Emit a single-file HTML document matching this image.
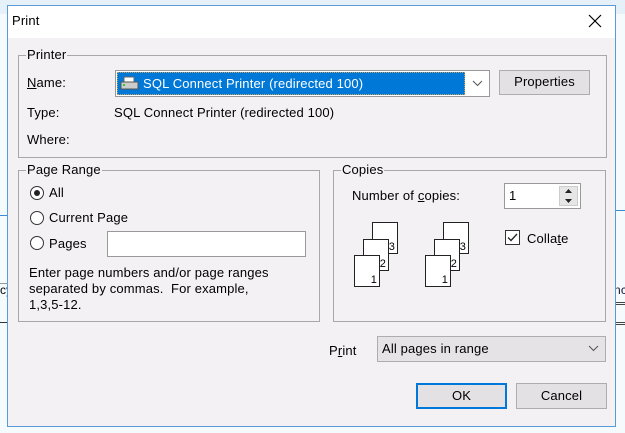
<!DOCTYPE html>
<html><head><meta charset="utf-8"><style>
*{box-sizing:border-box;margin:0;padding:0}
body{width:625px;height:433px;position:relative;overflow:hidden;background:#f5fafd;font-family:"Liberation Sans",Tahoma,sans-serif;font-size:13px;letter-spacing:0.15px;color:#000}
.a{position:absolute}
.t{position:absolute;white-space:nowrap;line-height:14px}
.grp{position:absolute;border:1px solid #a9a7a9}
.leg{position:absolute;top:-8px;left:7px;background:#f4f1f5;padding:0 1px;line-height:14px}
.btn{position:absolute;background:#e3e1e4;border:1px solid #adadad;text-align:center;line-height:22px}
.rad{position:absolute;width:14px;height:14px;border:1px solid #333;border-radius:50%;background:#fff}
.pg{position:absolute;width:26px;height:32px;border:1px solid #222;background:#fff;font-size:11px}
.pg span{position:absolute;right:2px;bottom:0px;line-height:12px}
u{text-decoration:underline}
</style></head><body>
<div class="a" style="left:0;top:0;width:625px;height:14px;background:#e6f0f8"></div>
<div class="a" style="left:0;top:215px;width:10px;height:1px;background:#3c8ad0"></div>
<div class="a" style="left:0;top:283px;width:10px;height:1px;background:#999"></div>
<div class="t" style="left:0;top:283px;font-size:12px">cy</div>
<div class="a" style="left:0;top:322px;width:10px;height:1px;background:#333"></div>
<div class="a" style="left:615px;top:210px;width:10px;height:1px;background:#3c8ad0"></div>
<div class="t" style="left:614px;top:283px;font-size:12px;color:#113">nc</div>
<div class="a" style="left:615px;top:302px;width:10px;height:3px;border-top:1px solid #444;border-bottom:1px solid #444"></div>
<div class="a" style="left:615px;top:322px;width:10px;height:3px;border-top:1px solid #444;border-bottom:1px solid #444"></div>
<div class="a" style="left:7px;top:5px;width:609px;height:422px;background:#f4f1f5;border:1px solid #5a9ad6"></div>
<div class="a" style="left:8px;top:6px;width:607px;height:32px;background:#fff"></div>
<div class="t" style="left:12px;top:14px;font-size:13px">Print</div>
<svg class="a" style="left:588px;top:14px" width="14" height="14"><path d="M1 1L13 13M13 1L1 13" stroke="#000" stroke-width="1.2"/></svg>

<div class="grp" style="left:18px;top:55px;width:589px;height:103px"><div class="leg">Printer</div></div>
<div class="t" style="left:27px;top:76px"><u>N</u>ame:</div>
<div class="a" style="left:115px;top:70px;width:375px;height:27px;background:#fff;border:1px solid #999"></div>
<div class="a" style="left:117px;top:72px;width:348px;height:23px;background:#0078d7;border:1px dotted #c8a060"></div>
<svg class="a" style="left:120px;top:74px" width="20" height="18"><path d="M4 3h10v5H4z" fill="#fff" stroke="#666"/><path d="M1 8h17v7H1z" fill="#ccc" stroke="#555"/><rect x="3" y="10" width="2" height="2" fill="#3c3"/></svg>
<div class="t" style="left:143px;top:77px;color:#fff">SQL Connect Printer (redirected 100)</div>
<svg class="a" style="left:472px;top:80px" width="11" height="7"><path d="M1 1l4.5 4.5L10 1" stroke="#555" fill="none"/></svg>
<div class="btn" style="left:499px;top:70px;width:91px;height:25px">Properties</div>
<div class="t" style="left:27px;top:106px">Type:</div>
<div class="t" style="left:114px;top:106px">SQL Connect Printer (redirected 100)</div>
<div class="t" style="left:27px;top:133px">Where:</div>

<div class="grp" style="left:18px;top:170px;width:302px;height:152px"><div class="leg">Page Range</div></div>
<div class="rad" style="left:30px;top:186px"><div class="a" style="left:3px;top:3px;width:6px;height:6px;border-radius:50%;background:#222"></div></div>
<div class="t" style="left:49px;top:186px">All</div>
<div class="rad" style="left:30px;top:211px"></div>
<div class="t" style="left:49px;top:211px">Current Page</div>
<div class="rad" style="left:30px;top:236px"></div>
<div class="t" style="left:49px;top:237px">Pages</div>
<div class="a" style="left:107px;top:231px;width:199px;height:26px;background:#fff;border:1px solid #999"></div>
<div class="t" style="left:29px;top:265px;line-height:16px">Enter page numbers and/or page ranges<br>separated by commas.&nbsp; For example,<br>1,3,5-12.</div>

<div class="grp" style="left:333px;top:170px;width:273px;height:152px"><div class="leg">Copies</div></div>
<div class="t" style="left:352px;top:189px">Number of <u>c</u>opies:</div>
<div class="a" style="left:504px;top:183px;width:77px;height:26px;background:#fff;border:1px solid #999"></div>
<div class="t" style="left:509px;top:189px">1</div>
<div class="a" style="left:559px;top:186px;width:19px;height:20px;background:#e6e6e6;border:1px solid #ccc"></div>
<svg class="a" style="left:563px;top:187px" width="11" height="18"><path d="M2 6h7L5.5 2z M2 12h7L5.5 16z" fill="#222"/></svg>
<div class="pg" style="left:372px;top:222px"><span>3</span></div>
<div class="pg" style="left:363px;top:239px"><span>2</span></div>
<div class="pg" style="left:354px;top:255px"><span>1</span></div>
<div class="pg" style="left:443px;top:222px"><span>3</span></div>
<div class="pg" style="left:434px;top:239px"><span>2</span></div>
<div class="pg" style="left:425px;top:255px"><span>1</span></div>
<div class="a" style="left:505px;top:230px;width:15px;height:15px;background:#fff;border:1px solid #333"></div>
<svg class="a" style="left:506px;top:231px" width="13" height="13"><path d="M2 6.5l3 3L11 3" stroke="#222" stroke-width="1.3" fill="none"/></svg>
<div class="t" style="left:527px;top:232px">Colla<u>t</u>e</div>

<div class="t" style="left:329px;top:344px">P<u>r</u>int</div>
<div class="a" style="left:377px;top:336px;width:229px;height:26px;background:#e5e3e6;border:1px solid #adadad"></div>
<div class="t" style="left:382px;top:342px">All pages in range</div>
<svg class="a" style="left:588px;top:345px" width="11" height="7"><path d="M1 1l4.5 4.5L10 1" stroke="#555" fill="none"/></svg>
<div class="btn" style="left:416px;top:383px;width:91px;height:26px;border:2px solid #0078d7;line-height:22px">OK</div>
<div class="btn" style="left:516px;top:383px;width:91px;height:26px;line-height:24px">Cancel</div>
</body></html>
